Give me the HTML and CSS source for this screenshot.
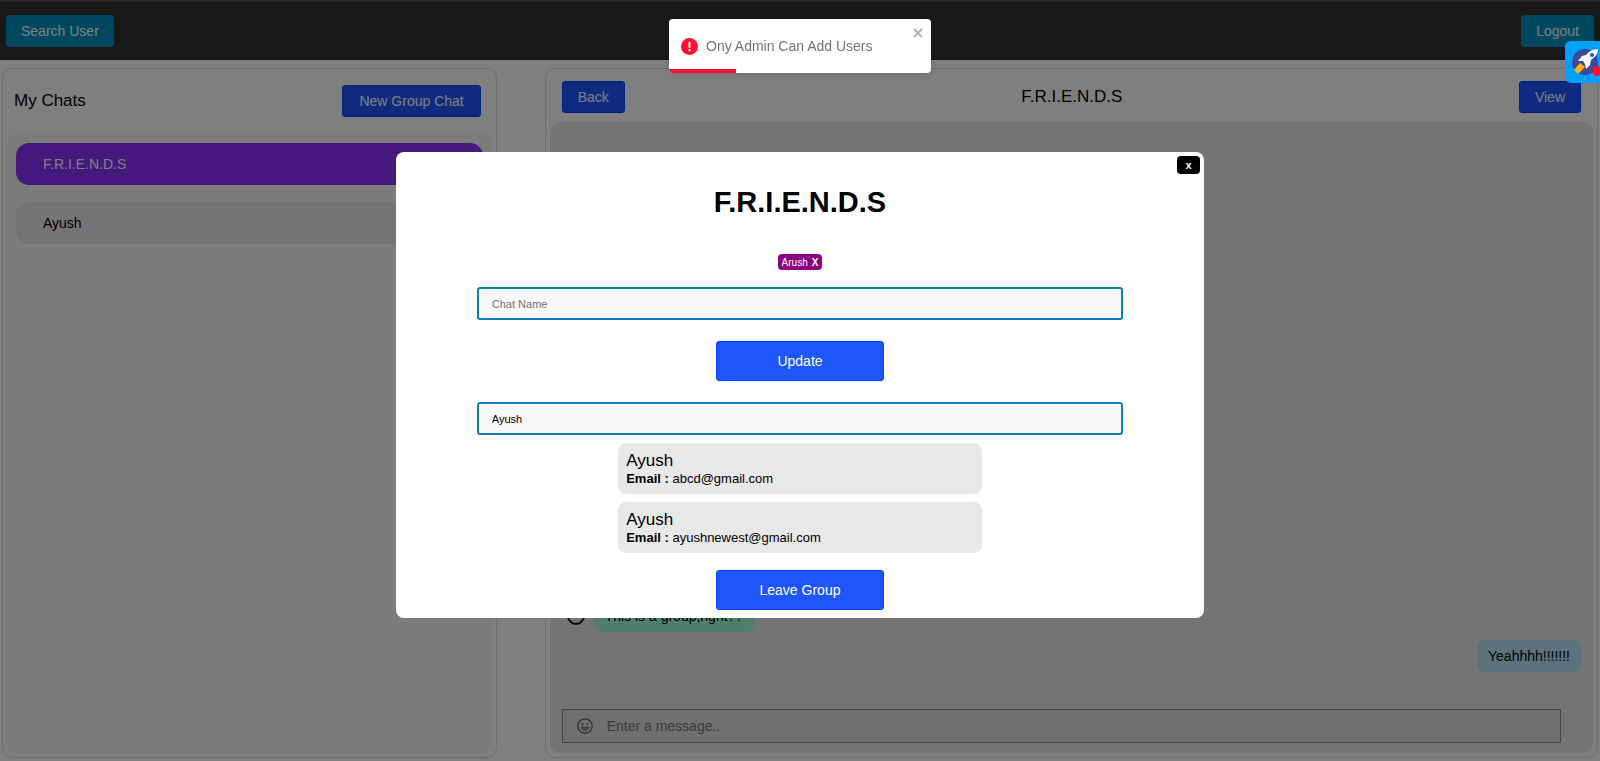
FILE: index.html
```
<!DOCTYPE html>
<html lang="en">
<head>
	<meta charset="utf-8">
	<meta name="viewport" content="width=device-width, initial-scale=1">
	<title>Chats</title>
	<link rel="stylesheet" href="styles.css">
</head>
<body>
	<div class="app">
		<header class="navbar">
			<button type="button" class="navBtn">Search User</button>
			<button type="button" class="navBtn">Logout</button>
		</header>

		<main class="content">
			<section class="panel chatsPanel">
				<div class="chatsHead">
					<h2 class="panelTitle">My Chats</h2>
					<button type="button" class="btn wide">New Group Chat</button>
				</div>
				<div class="chatList">
					<button type="button" class="chatItem active">F.R.I.E.N.D.S</button>
					<button type="button" class="chatItem">Ayush</button>
				</div>
			</section>

			<section class="panel chatPanel">
				<div class="chatHead">
					<button type="button" class="btn">Back</button>
					<h2 class="panelTitle">F.R.I.E.N.D.S</h2>
					<button type="button" class="btn">View</button>
				</div>
				<div class="chatBox">
					<div class="message">
						<svg class="avatar" viewBox="0 0 20 20" aria-hidden="true">
							<circle cx="10" cy="10" r="10" fill="#eee"/>
							<circle cx="10" cy="10" r="8" fill="#e8e8e8" stroke="#000" stroke-width="2"/>
							<circle cx="10" cy="7" r="3"/>
						</svg>
						<p class="bubble">This is a group,right??</p>
					</div>
					<div class="message own">
						<p class="bubble">Yeahhhh!!!!!!!</p>
					</div>
					<div class="compose">
						<svg class="emoji" viewBox="0 0 16 16" aria-hidden="true">
							<circle cx="8" cy="8" r="7.2" fill="none" stroke="#555" stroke-width="1.2"/>
							<circle cx="5.6" cy="5.9" r="1" fill="#555"/>
							<circle cx="10.4" cy="5.9" r="1" fill="#555"/>
							<path d="M4 9h8c-.4 2.1-2 3.3-4 3.3S4.4 11.1 4 9z" fill="#999" stroke="#666" stroke-width=".8"/>
						</svg>
						<input type="text" class="composeInput" placeholder="Enter a message.." aria-label="Message">
					</div>
				</div>
			</section>
		</main>
	</div>

	<div class="overlay">
		<div class="modal" role="dialog" aria-labelledby="groupName">
			<button type="button" class="closeBtn" aria-label="Close">x</button>
			<h1 class="modalTitle" id="groupName">F.R.I.E.N.D.S</h1>
			<span class="tag">Arush <button type="button" class="tagBtn">X</button></span>
			<input type="text" class="field" placeholder="Chat Name" aria-label="Chat Name">
			<button type="button" class="actionBtn">Update</button>
			<input type="text" class="field" value="Ayush" aria-label="Add user">
			<ul class="users">
				<li class="user">
					<p class="userName">Ayush</p>
					<p class="userMail"><b>Email : </b>abcd@gmail.com</p>
				</li>
				<li class="user">
					<p class="userName">Ayush</p>
					<p class="userMail"><b>Email : </b>ayushnewest@gmail.com</p>
				</li>
			</ul>
			<button type="button" class="actionBtn">Leave Group</button>
		</div>
	</div>

	<div class="toast" role="alert">
		<svg class="toastIcon" viewBox="0 0 18 18" aria-hidden="true">
			<circle cx="9" cy="9" r="9" fill="#ff0f33"/>
			<path d="M9 4.6v5.2" stroke="#fff" stroke-width="2" stroke-linecap="round"/>
			<circle cx="9" cy="12.9" r="1.2" fill="#fff"/>
		</svg>
		<p>Ony Admin Can Add Users</p>
		<button type="button" class="toastClose" aria-label="Close notification">
			<svg viewBox="0 0 10 10"><path d="M1 1l8 8M9 1L1 9" stroke="#b0b0b0" stroke-width="1.8"/></svg>
		</button>
		<div class="toastBar"></div>
	</div>

	<button type="button" class="rocket" aria-label="Launcher">
		<svg viewBox="0 0 35 42">
			<circle cx="20" cy="21" r="13" fill="#3d4a9b"/>
			<path d="M9 29l6-7 5 4-7 7z" fill="#ffb31a"/>
			<path d="M33 8c-5 0-9 2-12 6l-4 1-4 5 5 0 2 3 1 5 4-4 1-5c4-3 7-6 7-11z" fill="#fff"/>
			<circle cx="27" cy="14" r="2" fill="#3d4a9b"/>
			<circle cx="32" cy="30" r="5" fill="#ff0f33"/>
		</svg>
	</button>
</body>
</html>
```
FILE: styles.css
```
*{box-sizing: border-box;margin: 0;padding: 0;}
body{font-family: Arial, "Liberation Sans", sans-serif;font-size: 14px;color: #000;background: #fff;}
button,input{font-family: inherit;}
button{cursor: pointer;}

.app{display: flex;flex-direction: column;height: 100vh;padding-bottom: 3px;}

.navbar{display: flex;justify-content: space-between;align-items: center;height: 60px;padding: 0 6px;background: #333;border-top: 2px solid #555;border-bottom: 1px solid #222;}
.navBtn{height: 32px;padding: 0 15px;font-size: 14px;color: #fff;background: #0090c0;border: none;border-radius: 4px;}

.content{display: flex;flex: 1;justify-content: space-between;min-height: 0;padding: 8px 2px 0;}
.panel{display: flex;flex-direction: column;border: 1px solid #ddd;border-radius: 10px;}
.panelTitle{font-size: 17px;font-weight: normal;}
.btn{height: 32px;padding: 0 15px;font-size: 14px;color: #fff;background: #1f56ff;border: 1px solid #0040ff;border-radius: 3px;}
.wide{padding: 0 16px;}

.chatsPanel{width: 31%;padding: 0 3px 3px;}
.chatsHead{display: flex;justify-content: space-between;align-items: center;height: 64px;padding: 0 12px 0 8px;}
.chatList{display: flex;flex-direction: column;flex: 1;gap: 17px;padding: 10px;background: #f9f9f9;border-radius: 12px;}
.chatItem{height: 42px;padding: 0 27px;font-size: 14px;text-align: left;color: #000;background: #e8e8e8;border: none;border-radius: 13px;}
.active{color: #fff;background: #8830fa;}

.chatPanel{width: 66%;padding: 0 4px 4px;}
.chatHead{display: flex;justify-content: space-between;align-items: center;height: 53px;padding: 2px 12px 0;}
.chatBox{display: flex;flex-direction: column;flex: 1;justify-content: flex-end;padding: 10px 12px;background: #e8e8e8;border-radius: 10px;}
.message{display: flex;align-items: center;gap: 8px;margin-bottom: 8px;padding-left: 4px;}
.own{justify-content: flex-end;margin-bottom: 37px;}
.avatar{width: 20px;height: 20px;}
.bubble{height: 32px;line-height: 32px;padding: 0 11px;background: #9effd0;border-radius: 8px;}
.own .bubble{background: #b9e4fb;}
.compose{display: flex;align-items: center;width: 98%;height: 34px;padding: 0 14px;background: #e0e0e0;border: 1px solid #888;}
.emoji{width: 16px;height: 16px;}
.composeInput{flex: 1;height: 32px;padding: 0 14px;font-size: 14px;background: none;border: none;outline: none;}
.composeInput::placeholder{color: #757575;}

.overlay{position: fixed;inset: 0;display: flex;justify-content: center;align-items: flex-start;padding-top: 20vh;background: rgba(0,0,0,.5);}
.modal{position: relative;display: flex;flex-direction: column;align-items: center;width: 50.5%;padding: 34px 0 8px;background: #fff;border-radius: 8px;}
.closeBtn{position: absolute;top: 4px;right: 4px;width: 23px;height: 18px;font-size: 11px;font-weight: bold;line-height: 16px;color: #fff;background: #000;border: none;border-radius: 4px;}
.modalTitle{font-size: 29px;line-height: 32px;margin-bottom: 36px;}
.tag{display: flex;align-items: center;gap: 4px;height: 16px;margin-bottom: 17px;padding: 0 4px;font-size: 10px;color: #fff;background: #8b0080;border-radius: 4px;}
.tagBtn{font-size: 10px;font-weight: bold;color: #fff;background: none;border: none;}
.field{width: 80%;height: 33px;padding: 0 13px;font-size: 11px;color: #000;background: #f8f8f8;border: 2px solid #0a7fb8;border-radius: 3px;}
.field::placeholder{color: #757575;}
.actionBtn{width: 168px;height: 40px;font-size: 14px;color: #fff;background: #1f56ff;border: 1px solid #0040ff;border-radius: 3px;}
.field + .actionBtn{margin: 21px 0;}
.users{display: flex;flex-direction: column;gap: 8px;width: 45%;margin: 8px 0 17px;list-style-type: none;}
.user{padding: 8px;background: #e8e8e8;border-radius: 8px;}
.userName{font-size: 17px;line-height: 20px;}
.userMail{font-size: 13px;line-height: 15px;}

.toast{position: fixed;top: 19px;left: 50%;display: flex;align-items: center;gap: 8px;width: 262px;height: 54px;margin-left: -131px;padding: 0 12px;font-size: 14px;color: #757575;background: #fff;border-radius: 4px;box-shadow: 0 1px 10px rgba(0,0,0,.15);overflow: hidden;}
.toastIcon{width: 17px;height: 17px;}
.toastClose{position: absolute;top: 9px;right: 8px;width: 10px;height: 10px;background: none;border: none;}
.toastClose svg,.rocket svg{display: block;}
.toastBar{position: absolute;left: 0;bottom: 0;width: 67px;height: 4px;background: #ff0f33;}

.rocket{position: fixed;top: 41px;right: 0;width: 35px;height: 42px;background: #00a2f8;border: none;border-radius: 6px 0 0 6px;overflow: hidden;}
```
